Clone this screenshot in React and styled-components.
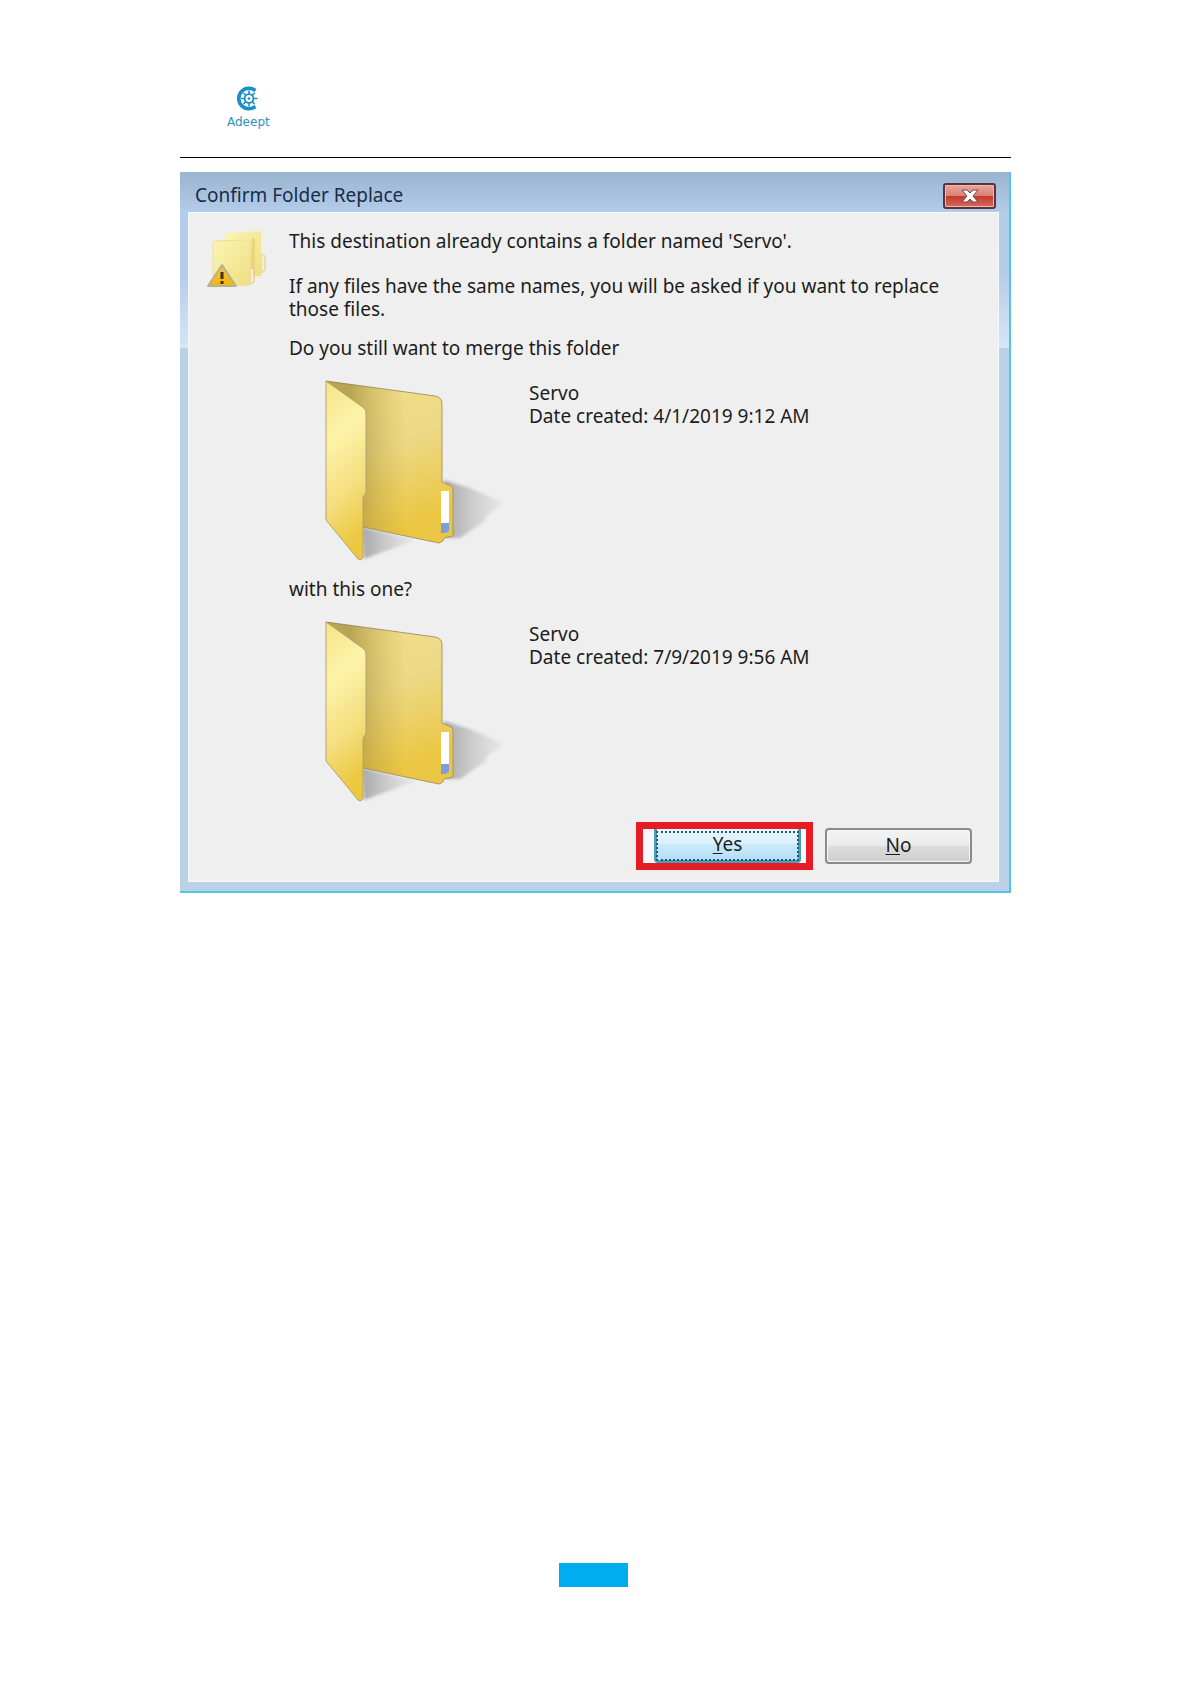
import React from 'react';
import styled, { createGlobalStyle } from 'styled-components';

const conflicts = [
    { id: 'existing', name: 'Servo', created: '4/1/2019 9:12 AM' },
    { id: 'incoming', name: 'Servo', created: '7/9/2019 9:56 AM' }
];

const Logo = () => (
    <svg width="24" height="26" viewBox="0 0 24 26" fill="none" stroke="#1c8fc9" aria-hidden="true">
        <path d="M19.4 4.6A10.2 10.2 0 1 0 19.4 20.4" strokeWidth="3.6" />
        <circle cx="13" cy="12.5" r="4.4" strokeWidth="1.8" />
        <path
            d="M13 4.5v4M13 16.5v4M5 12.5h4M17 12.5h4.5M7.5 7l2.6 2.6M15.9 15.4l2.8 2.8M7.5 18l2.6-2.6M15.9 9.6l2.8-2.8"
            strokeWidth="1.6"
        />
        <circle cx="13" cy="12.5" r="1.3" fill="#1c8fc9" stroke="none" />
    </svg>
);

const MergeIcon = () => (
    <svg width="62" height="60" viewBox="0 0 62 60" aria-hidden="true">
        <defs>
            <linearGradient id="mergeFill" x1="0" y1="0" x2="1" y2="1">
                <stop offset="0" stopColor="#fbf4b4" />
                <stop offset="1" stopColor="#efdf82" />
            </linearGradient>
            <linearGradient id="warnFill" x1="0" y1="0" x2="0" y2="1">
                <stop offset="0" stopColor="#e9c75a" />
                <stop offset="1" stopColor="#f7b500" />
            </linearGradient>
        </defs>
        <path d="M54 24l4 2v14l-4 3z" fill="#f5efd0" stroke="#d8cc92" />
        <path d="M18 3L52 1q2 0 2 2v43l-36 2z" fill="url(#mergeFill)" />
        <path d="M45 8l3 1v36l-5 2z" fill="#dec65e" opacity=".5" />
        <path d="M43 37l4 2v13l-4 2z" fill="#fbeec8" stroke="#dfc080" />
        <path d="M6 13q0-2 2-2l33-1q2 0 2 2v43l-37 1z" fill="url(#mergeFill)" stroke="#eee09a" />
        <path d="M15 35L29 56H1z" fill="url(#warnFill)" stroke="#b5b09a" strokeWidth="2" strokeLinejoin="round" />
        <path d="M15 42v7M15 51v3" stroke="#4a2c00" strokeWidth="3" />
    </svg>
);

const FolderIcon = ({ id }) => (
    <svg width="200" height="186" viewBox="0 0 200 186" aria-hidden="true">
        <defs>
            <linearGradient id={id + '-back'} x1="0" y1="0" x2="0.3" y2="1">
                <stop offset="0" stopColor="#f4e08a" />
                <stop offset="0.5" stopColor="#ecd986" />
                <stop offset="1" stopColor="#ebc642" />
            </linearGradient>
            <linearGradient id={id + '-fold'} x1="0" y1="0" x2="1" y2="0">
                <stop offset="0.3" stopColor="#8a7428" stopOpacity="0.55" />
                <stop offset="1" stopColor="#b89c3c" stopOpacity="0" />
            </linearGradient>
            <linearGradient id={id + '-front'} x1="0" y1="0" x2="0.2" y2="1">
                <stop offset="0" stopColor="#f5e388" />
                <stop offset="0.35" stopColor="#fdf3a9" />
                <stop offset="0.7" stopColor="#f4de7e" />
                <stop offset="1" stopColor="#ebc83f" />
            </linearGradient>
            <linearGradient id={id + '-shade'} x1="0" y1="0" x2="1" y2="0">
                <stop offset="0" stopColor="#8f8f8f" stopOpacity="0.75" />
                <stop offset="1" stopColor="#c4c4c4" stopOpacity="0.2" />
            </linearGradient>
            <filter id={id + '-soft'}>
                <feGaussianBlur stdDeviation="1.5" />
            </filter>
        </defs>
        <g fill={`url(#${id}-shade)`} filter={`url(#${id}-soft)`}>
            <path d="M124 104L150 112L184 127L166 140V144L140 162L126 162z" />
            <path d="M42 151L96 164L44 183z" />
        </g>
        <path
            d="M6 5L115 20Q122 21 122 28V106L131 110Q133 111 133 114V160L124 162L123 165L119 167L43 151z"
            fill={`url(#${id}-back)`}
            stroke="#a8976a"
        />
        <path d="M6 5L86 16V160L43 151z" fill={`url(#${id}-fold)`} />
        <path d="M121 115h8v32h-8z" fill="#ffffff" />
        <path d="M121 147h8v8l-4 2h-4z" fill="#7d9fdc" />
        <path
            d="M6 5L44 32Q46 34 46 37V117L43 121V181Q42 185 38 183L6 144z"
            fill={`url(#${id}-front)`}
            stroke="#b3a472"
        />
    </svg>
);

const CloseIcon = () => (
    <svg width="20" height="14" viewBox="0 0 20 14" aria-hidden="true">
        <path
            d="M2 1h5l3 3 3-3h5l-5 6 5 6h-5l-3-3-3 3H2l5-6z"
            fill="#ffffff"
            stroke="#6b4a52"
        />
    </svg>
);

const Conflict = ({ item }) => (
    <FolderRow>
        <FolderIcon id={item.id} />
        <Details>
            <div>{item.name}</div>
            <div>{'Date created: ' + item.created}</div>
        </Details>
    </FolderRow>
);

const App = () => {
    const [existing, incoming] = conflicts;

    return (
        <Page>
            <GlobalStyle />
            <Header>
                <Brand>
                    <Logo />
                    <BrandName>Adeept</BrandName>
                </Brand>
            </Header>
            <Dialog role="dialog" aria-labelledby="dialog-title">
                <TitleBar>
                    <Title id="dialog-title">Confirm Folder Replace</Title>
                    <CloseButton type="button" aria-label="Close">
                        <CloseIcon />
                    </CloseButton>
                </TitleBar>
                <Body>
                    <Content>
                        <MergeIcon />
                        <Messages>
                            <Intro>
                                <Text>This destination already contains a folder named 'Servo'.</Text>
                                <Text>
                                    If any files have the same names, you will be asked if you want to replace those files.
                                </Text>
                            </Intro>
                            <Text>Do you still want to merge this folder</Text>
                            <Conflict item={existing} />
                            <Text>with this one?</Text>
                            <Conflict item={incoming} />
                        </Messages>
                    </Content>
                    <Actions>
                        <Highlight>
                            <YesButton type="button"><u>Y</u>es</YesButton>
                        </Highlight>
                        <NoButton type="button"><u>N</u>o</NoButton>
                    </Actions>
                </Body>
            </Dialog>
            <Footer>
                <PageMark />
            </Footer>
        </Page>
    );
}

const GlobalStyle = createGlobalStyle`
   * {
      box-sizing: border-box;
   }

   body {
      margin: 0;
      background: #ffffff;
      font-family: "Noto Sans", "Open Sans", sans-serif;
   }
`;

const Page = styled.div`
   display: flex;
   flex-direction: column;
   min-height: 100vh;
   padding: 0 180px;
`;

const Header = styled.header`
   display: flex;
   padding: 86px 47px 26px;
   border-bottom: 1px solid #000000;
   margin-bottom: 14px;
`;

const Brand = styled.div`
   display: flex;
   flex-direction: column;
   align-items: center;
   gap: 2px;
`;

const BrandName = styled.span`
   color: #2a93c4;
   font-family: "DejaVu Sans", sans-serif;
   font-size: 12px;
   line-height: 17px;
`;

const Dialog = styled.section`
   padding: 0 10px 9px 8px;
   border: solid #4fc6e6;
   border-width: 0 2px 2px 0;
   background:
      linear-gradient(to bottom, #9bb5d0 0, #b2cce9 40px, #b4cce8 100px, #d6e5f7 176px, transparent 176px),
      #bad1e8;
`;

const TitleBar = styled.div`
   display: flex;
   align-items: center;
   justify-content: space-between;
   height: 40px;
   padding: 7px 3px 0 7px;
`;

const Title = styled.h1`
   margin: 0;
   color: #182c48;
   font-size: 19px;
   font-weight: 400;
   line-height: 23px;
`;

const CloseButton = styled.button`
   display: flex;
   align-items: center;
   justify-content: center;
   width: 53px;
   height: 26px;
   padding: 0;
   border: 2px solid #5b3340;
   border-radius: 3px;
   background: linear-gradient(to bottom, #e9a79c 0%, #dc7f74 48%, #c03a2a 50%, #d9695a 100%);
   box-shadow: inset 0 0 0 1px #efb9ae;
`;

const Body = styled.div`
   display: flex;
   flex-direction: column;
   gap: 19px;
   padding: 17px 26px 11px 18px;
   border: 1px solid #f6f8fb;
   background: #efefef;
   color: #1c1c1c;
   font-size: 19px;
   line-height: 23px;
`;

const Content = styled.div`
   display: grid;
   grid-template-columns: 62px 1fr;
   gap: 20px;
`;

const Messages = styled.div`
   display: flex;
   flex-direction: column;
   gap: 16px;
`;

const Intro = styled.div`
   display: flex;
   flex-direction: column;
   gap: 22px;
`;

const Text = styled.p`
   margin: 0;
`;

const FolderRow = styled.div`
   display: flex;
   gap: 9px;
   padding-left: 31px;
`;

const Details = styled.div`
   padding-top: 6px;
`;

const Actions = styled.div`
   display: flex;
   align-items: center;
   justify-content: flex-end;
   gap: 12px;
`;

const Highlight = styled.div`
   display: flex;
   padding: 0 5px 0 11px;
   border: 7px solid #e51c23;
   background: #f8f8fa;
`;

const DialogButton = styled.button`
   width: 147px;
   height: 36px;
   padding: 0 0 2px;
   border: 2px solid #8a8a8a;
   border-radius: 4px;
   background: linear-gradient(to bottom, #f3f3f3 0%, #ebebeb 48%, #dcdcdc 50%, #cfcfcf 100%);
   box-shadow: inset 0 0 0 1px #f7f7f7;
   color: #1c1c1c;
   font-family: inherit;
   font-size: 19px;
   line-height: 23px;

   u {
      text-underline-offset: 2px;
   }
`;

const NoButton = styled(DialogButton)``;

const YesButton = styled(DialogButton)`
   height: 34px;
   padding: 0;
   border: 3px solid #4a9cbd;
   border-top: 0;
   border-radius: 0 0 4px 4px;
   background: linear-gradient(to bottom, #eaf6fd 0%, #d9f0fc 48%, #c9eafc 50%, #b4e0f7 100%);
   box-shadow: none;
   outline: 2px dotted #28566e;
   outline-offset: -4px;
`;

const Footer = styled.footer`
   display: flex;
   justify-content: center;
   margin-top: auto;
   padding: 0 4px 97px 0;
`;

const PageMark = styled.div`
   width: 69px;
   height: 24px;
   background: #00aeef;
`;

export default App;
